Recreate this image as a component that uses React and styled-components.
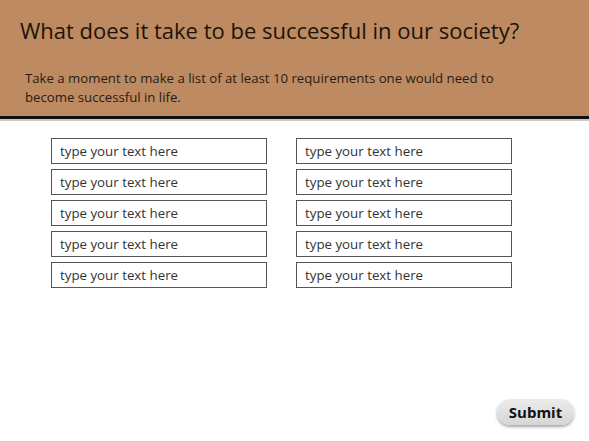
import React from 'react'
import styled, { createGlobalStyle } from 'styled-components'

const GlobalStyle = createGlobalStyle`
  html, body {
    margin: 0;
    padding: 0;
    background: #ffffff;
    font-family: "Open Sans", "Liberation Sans", sans-serif;
  }
`

function App() {
  const fields = Array.from({ length: 10 }, (_, i) => i)

  return (
    <Page>
      <GlobalStyle />
      <Header>
        <Title>What does it take to be successful in our society?</Title>
        <Intro>
          Take a moment to make a list of at least 10 requirements one would need to
          <br />
          become successful in life.
        </Intro>
      </Header>
      <Grid>
        {fields.map(i => (
          <Field key={i} placeholder='type your text here' autoFocus={i === 0} />
        ))}
      </Grid>
      <Footer>
        <SubmitButton>Submit</SubmitButton>
      </Footer>
    </Page>
  )
}

export default App

const Page = styled.div`
  width: 589px;
  height: 441px;
  display: flex;
  flex-direction: column;
  overflow: hidden;
`

const Header = styled.div`
  background-color: #bd8a62;
  height: 119px;
  box-sizing: border-box;
  padding: 15px 20px 0 20px;
  border-bottom: 3px solid #111;
  box-shadow: 0 2px 0 #c9c9c9;
`

const Title = styled.h1`
  margin: 0;
  font-size: 22px;
  font-weight: 400;
  color: #1d1409;
`

const Intro = styled.p`
  margin: 24px 0 0 5px;
  font-size: 13.2px;
  line-height: 19px;
  color: #2a1c10;
`

const Grid = styled.div`
  display: grid;
  grid-template-columns: 216px 216px;
  column-gap: 29px;
  row-gap: 5px;
  padding: 19px 0 0 51px;
`

const Field = styled.input`
  width: 216px;
  height: 26px;
  box-sizing: border-box;
  border: 1px solid #555;
  padding: 0 8px;
  font-family: "Open Sans", "Liberation Sans", sans-serif;
  font-size: 13.3px;
  color: #333;
  outline: none;
  background: #fff;

  &::placeholder {
    color: #333;
    opacity: 1;
  }
`

const Footer = styled.div`
  flex: 1;
  display: flex;
  justify-content: flex-end;
  align-items: flex-end;
  padding: 0 15px 16px 0;
`

const SubmitButton = styled.button`
  width: 77px;
  height: 26px;
  border: none;
  border-radius: 13px;
  background: linear-gradient(#ececec, #d6d6d6);
  box-shadow: 0 2px 3px rgba(0, 0, 0, 0.35);
  font-family: "Open Sans", "Liberation Sans", sans-serif;
  font-size: 15px;
  font-weight: 700;
  color: #111;
  cursor: pointer;
  padding: 0;
`
